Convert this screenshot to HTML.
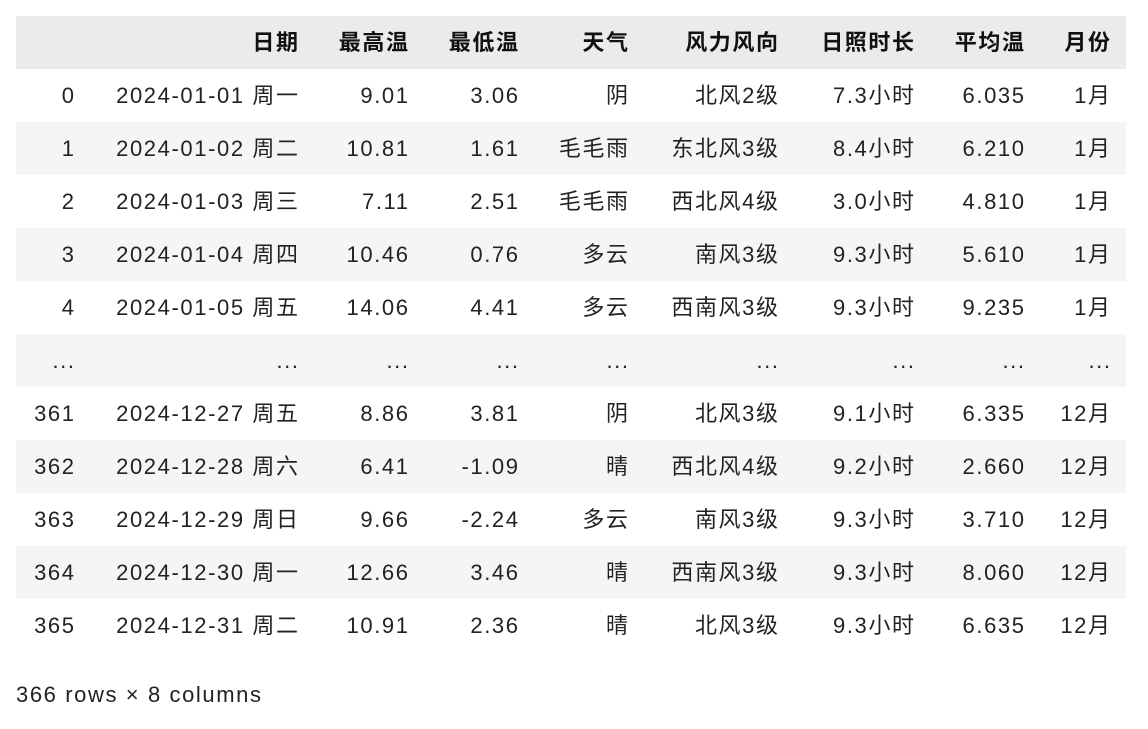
<!DOCTYPE html>
<html><head><meta charset="utf-8"><style>
body{margin:0;width:1148px;height:729px;background:#fff;font-family:"Liberation Sans","Noto Sans CJK SC",sans-serif;font-size:22px;letter-spacing:1.6px;color:#222;position:relative;overflow:hidden}
.r{position:absolute;left:16px;width:1110px;height:53px}
.r span{position:absolute;top:0;line-height:53px;white-space:nowrap;text-align:right;margin-right:-1.6px}
.h{background:#ebebeb;font-weight:bold;color:#111}
.o{background:#f5f5f5}
.c0{right:1052px}.c1{right:828px}.c2{right:718px}.c3{right:608px}.c4{right:498px}.c5{right:348px}.c6{right:212px}.c7{right:102px}.c8{right:16px}
.f{position:absolute;left:16px;top:680px;line-height:30px}
</style></head><body>
<div class="r h" style="top:16px"><span class="c1">日期</span><span class="c2">最高温</span><span class="c3">最低温</span><span class="c4">天气</span><span class="c5">风力风向</span><span class="c6">日照时长</span><span class="c7">平均温</span><span class="c8">月份</span></div>
<div class="r" style="top:69px"><span class="c0">0</span><span class="c1">2024-01-01 周一</span><span class="c2">9.01</span><span class="c3">3.06</span><span class="c4">阴</span><span class="c5">北风2级</span><span class="c6">7.3小时</span><span class="c7">6.035</span><span class="c8">1月</span></div>
<div class="r o" style="top:122px"><span class="c0">1</span><span class="c1">2024-01-02 周二</span><span class="c2">10.81</span><span class="c3">1.61</span><span class="c4">毛毛雨</span><span class="c5">东北风3级</span><span class="c6">8.4小时</span><span class="c7">6.210</span><span class="c8">1月</span></div>
<div class="r" style="top:175px"><span class="c0">2</span><span class="c1">2024-01-03 周三</span><span class="c2">7.11</span><span class="c3">2.51</span><span class="c4">毛毛雨</span><span class="c5">西北风4级</span><span class="c6">3.0小时</span><span class="c7">4.810</span><span class="c8">1月</span></div>
<div class="r o" style="top:228px"><span class="c0">3</span><span class="c1">2024-01-04 周四</span><span class="c2">10.46</span><span class="c3">0.76</span><span class="c4">多云</span><span class="c5">南风3级</span><span class="c6">9.3小时</span><span class="c7">5.610</span><span class="c8">1月</span></div>
<div class="r" style="top:281px"><span class="c0">4</span><span class="c1">2024-01-05 周五</span><span class="c2">14.06</span><span class="c3">4.41</span><span class="c4">多云</span><span class="c5">西南风3级</span><span class="c6">9.3小时</span><span class="c7">9.235</span><span class="c8">1月</span></div>
<div class="r o" style="top:334px"><span class="c0">...</span><span class="c1">...</span><span class="c2">...</span><span class="c3">...</span><span class="c4">...</span><span class="c5">...</span><span class="c6">...</span><span class="c7">...</span><span class="c8">...</span></div>
<div class="r" style="top:387px"><span class="c0">361</span><span class="c1">2024-12-27 周五</span><span class="c2">8.86</span><span class="c3">3.81</span><span class="c4">阴</span><span class="c5">北风3级</span><span class="c6">9.1小时</span><span class="c7">6.335</span><span class="c8">12月</span></div>
<div class="r o" style="top:440px"><span class="c0">362</span><span class="c1">2024-12-28 周六</span><span class="c2">6.41</span><span class="c3">-1.09</span><span class="c4">晴</span><span class="c5">西北风4级</span><span class="c6">9.2小时</span><span class="c7">2.660</span><span class="c8">12月</span></div>
<div class="r" style="top:493px"><span class="c0">363</span><span class="c1">2024-12-29 周日</span><span class="c2">9.66</span><span class="c3">-2.24</span><span class="c4">多云</span><span class="c5">南风3级</span><span class="c6">9.3小时</span><span class="c7">3.710</span><span class="c8">12月</span></div>
<div class="r o" style="top:546px"><span class="c0">364</span><span class="c1">2024-12-30 周一</span><span class="c2">12.66</span><span class="c3">3.46</span><span class="c4">晴</span><span class="c5">西南风3级</span><span class="c6">9.3小时</span><span class="c7">8.060</span><span class="c8">12月</span></div>
<div class="r" style="top:599px"><span class="c0">365</span><span class="c1">2024-12-31 周二</span><span class="c2">10.91</span><span class="c3">2.36</span><span class="c4">晴</span><span class="c5">北风3级</span><span class="c6">9.3小时</span><span class="c7">6.635</span><span class="c8">12月</span></div>
<div class="f">366 rows × 8 columns</div>
</body></html>
